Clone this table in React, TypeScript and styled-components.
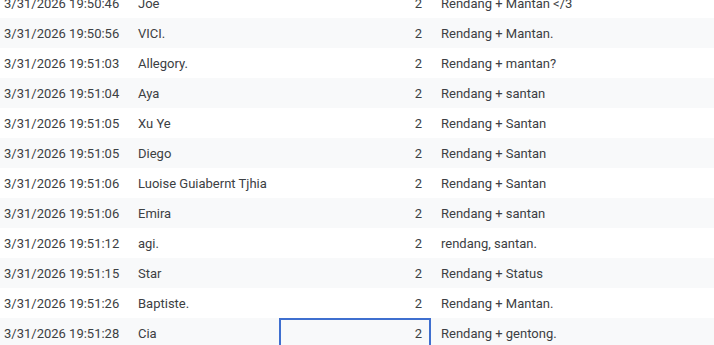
import React from "react";
import styled, { createGlobalStyle } from "styled-components";

const GlobalStyle = createGlobalStyle`
  html, body {
    margin: 0;
    padding: 0;
    background: #ffffff;
    overflow: hidden;
  }
`;

const responses = [
  ["3/31/2026 19:50:46", "Joe", "2", "Rendang + Mantan </3"],
  ["3/31/2026 19:50:56", "VICI.", "2", "Rendang + Mantan."],
  ["3/31/2026 19:51:03", "Allegory.", "2", "Rendang + mantan?"],
  ["3/31/2026 19:51:04", "Aya", "2", "Rendang + santan"],
  ["3/31/2026 19:51:05", "Xu Ye", "2", "Rendang + Santan"],
  ["3/31/2026 19:51:05", "Diego", "2", "Rendang + Santan"],
  ["3/31/2026 19:51:06", "Luoise Guiabernt Tjhia", "2", "Rendang + Santan"],
  ["3/31/2026 19:51:06", "Emira", "2", "Rendang + santan"],
  ["3/31/2026 19:51:12", "agi.", "2", "rendang, santan."],
  ["3/31/2026 19:51:15", "Star", "2", "Rendang + Status"],
  ["3/31/2026 19:51:26", "Baptiste.", "2", "Rendang + Mantan."],
  ["3/31/2026 19:51:28", "Cia", "2", "Rendang + gentong."],
];

export default function App() {
  return (
    <>
      <GlobalStyle />
      <Sheet>
        {responses.map((row, i) => (
          <Row key={i} $banded={i % 2 === 1}>
            <TimeCell>{row[0]}</TimeCell>
            <NameCell>{row[1]}</NameCell>
            <NumberCell $selected={i === responses.length - 1}>{row[2]}</NumberCell>
            <AnswerCell>{row[3]}</AnswerCell>
          </Row>
        ))}
      </Sheet>
    </>
  );
}

const Sheet = styled.div`
  display: flex;
  flex-direction: column;
  margin-top: -12px;
  width: 714px;
  font-family: Roboto, "Liberation Sans", Arial, sans-serif;
  font-size: 13px;
  color: #3c4043;
`;

const Row = styled.div<{ $banded: boolean }>`
  display: grid;
  grid-template-columns: 131px 149px 151px 1fr;
  height: 30px;
  background: ${(p) => (p.$banded ? "#f8f9fa" : "#ffffff")};
`;

const Cell = styled.div`
  display: flex;
  align-items: center;
  white-space: nowrap;
  overflow: hidden;
`;

const TimeCell = styled(Cell)`
  padding-left: 4px;
`;

const NameCell = styled(Cell)`
  padding-left: 7px;
`;

const NumberCell = styled(Cell)<{ $selected: boolean }>`
  position: relative;
  justify-content: flex-end;
  padding-right: 9px;
  overflow: visible;

  &::after {
    content: "";
    display: ${(p) => (p.$selected ? "block" : "none")};
    position: absolute;
    left: -1px;
    top: 0;
    right: 0;
    bottom: -2px;
    border: 2px solid #3f6fcf;
  }
`;

const AnswerCell = styled(Cell)`
  padding-left: 10px;
`;
